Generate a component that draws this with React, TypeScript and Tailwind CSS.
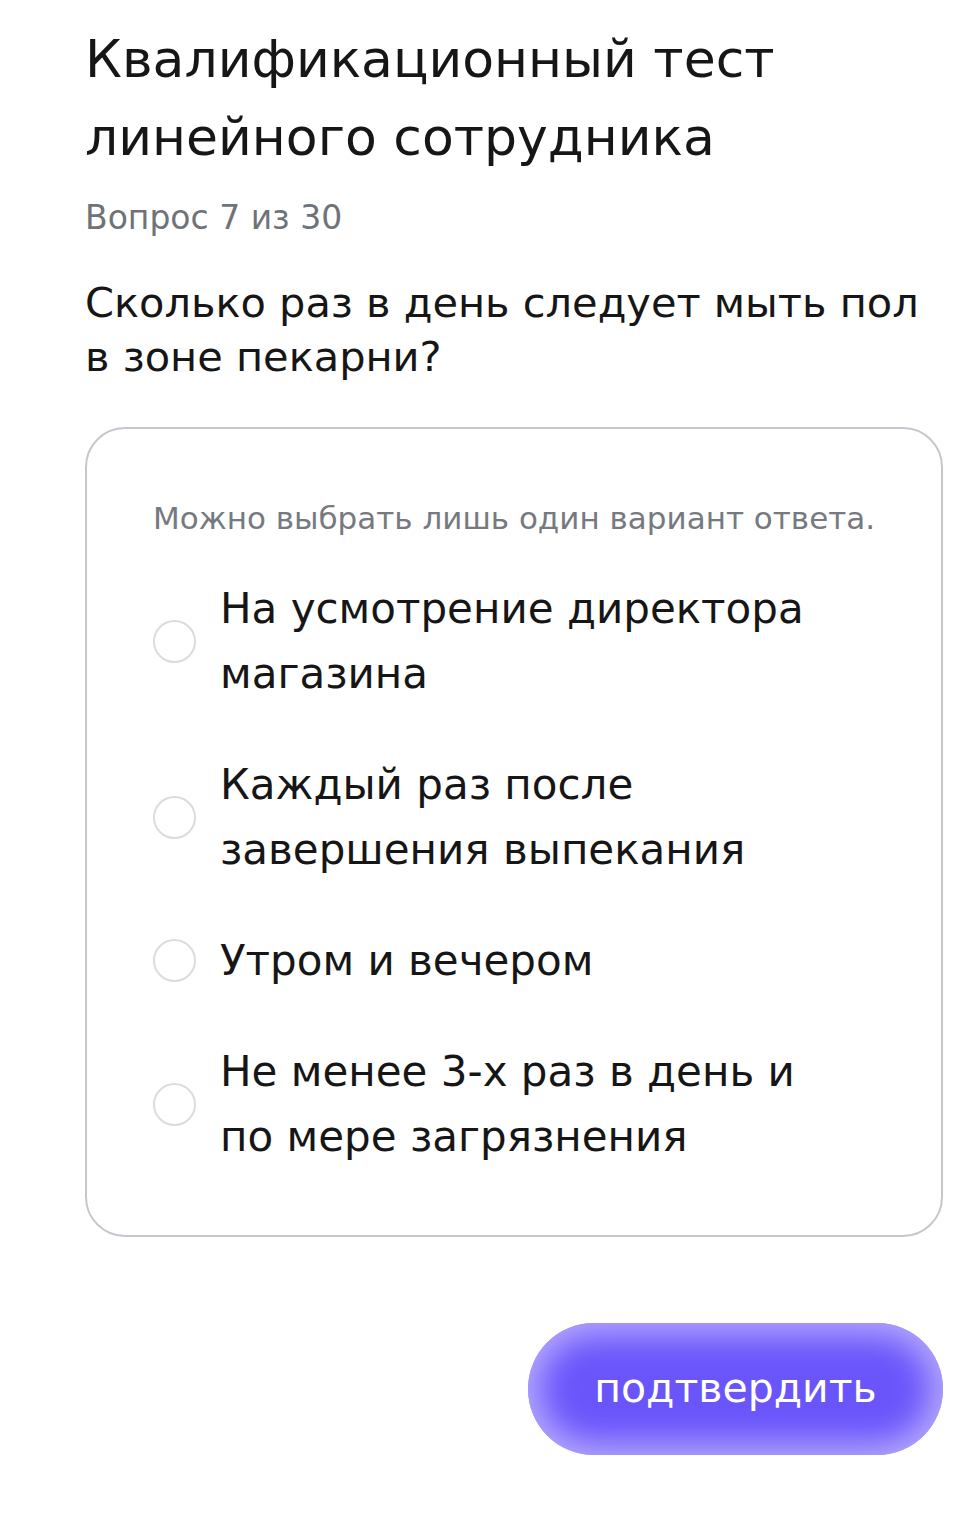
import React from "react";

const options: string[][] = [
  ["На усмотрение директора", "магазина"],
  ["Каждый раз после", "завершения выпекания"],
  ["Утром и вечером"],
  ["Не менее 3-х раз в день и", "по мере загрязнения"],
];

export default function App() {
  return (
    <div
      className="min-h-[1539px] w-[972px] bg-white text-[#161616]"
      style={{ fontFamily: '"DejaVu Sans", "Noto Sans", sans-serif' }}
    >
      <div className="pl-[85px] pr-[29px] pt-[20px]">
        <h1 className="text-[52px] leading-[78px] font-normal">
          Квалификационный тест
          <br />
          линейного сотрудника
        </h1>
        <div className="mt-[22px] text-[33px] leading-[40px] text-[#6f7378]">
          Вопрос 7 из 30
        </div>
        <div className="mt-[38px] text-[41.5px] leading-[54px]">
          Сколько раз в день следует мыть пол
          <br />в зоне пекарни?
        </div>

        <div className="mt-[43px] rounded-[40px] border-2 border-[#c4c8ce] pl-[66px] pr-[20px] pt-[70px] pb-[66px]">
          <div className="text-[31px] leading-[38px] text-[#767a80]">
            Можно выбрать лишь один вариант ответа.
          </div>
          <div className="mt-[39px] flex flex-col gap-[46px]">
            {options.map((lines, i) => (
              <div key={i} className="flex items-center gap-[24px]">
                <div className="h-[43px] w-[43px] shrink-0 rounded-full border-2 border-[#dcdcdc]" />
                <div className="text-[42px] leading-[65px] whitespace-nowrap">
                  {lines.map((l, j) => (
                    <div key={j}>{l}</div>
                  ))}
                </div>
              </div>
            ))}
          </div>
        </div>

        <div className="mt-[86px] flex justify-end">
          <button className="flex h-[132px] w-[415px] items-center justify-center rounded-full bg-[#6a55fb] text-[41px] text-white shadow-[inset_0_0_32px_12px_rgba(200,190,255,0.8)]">
            подтвердить
          </button>
        </div>
      </div>
    </div>
  );
}
